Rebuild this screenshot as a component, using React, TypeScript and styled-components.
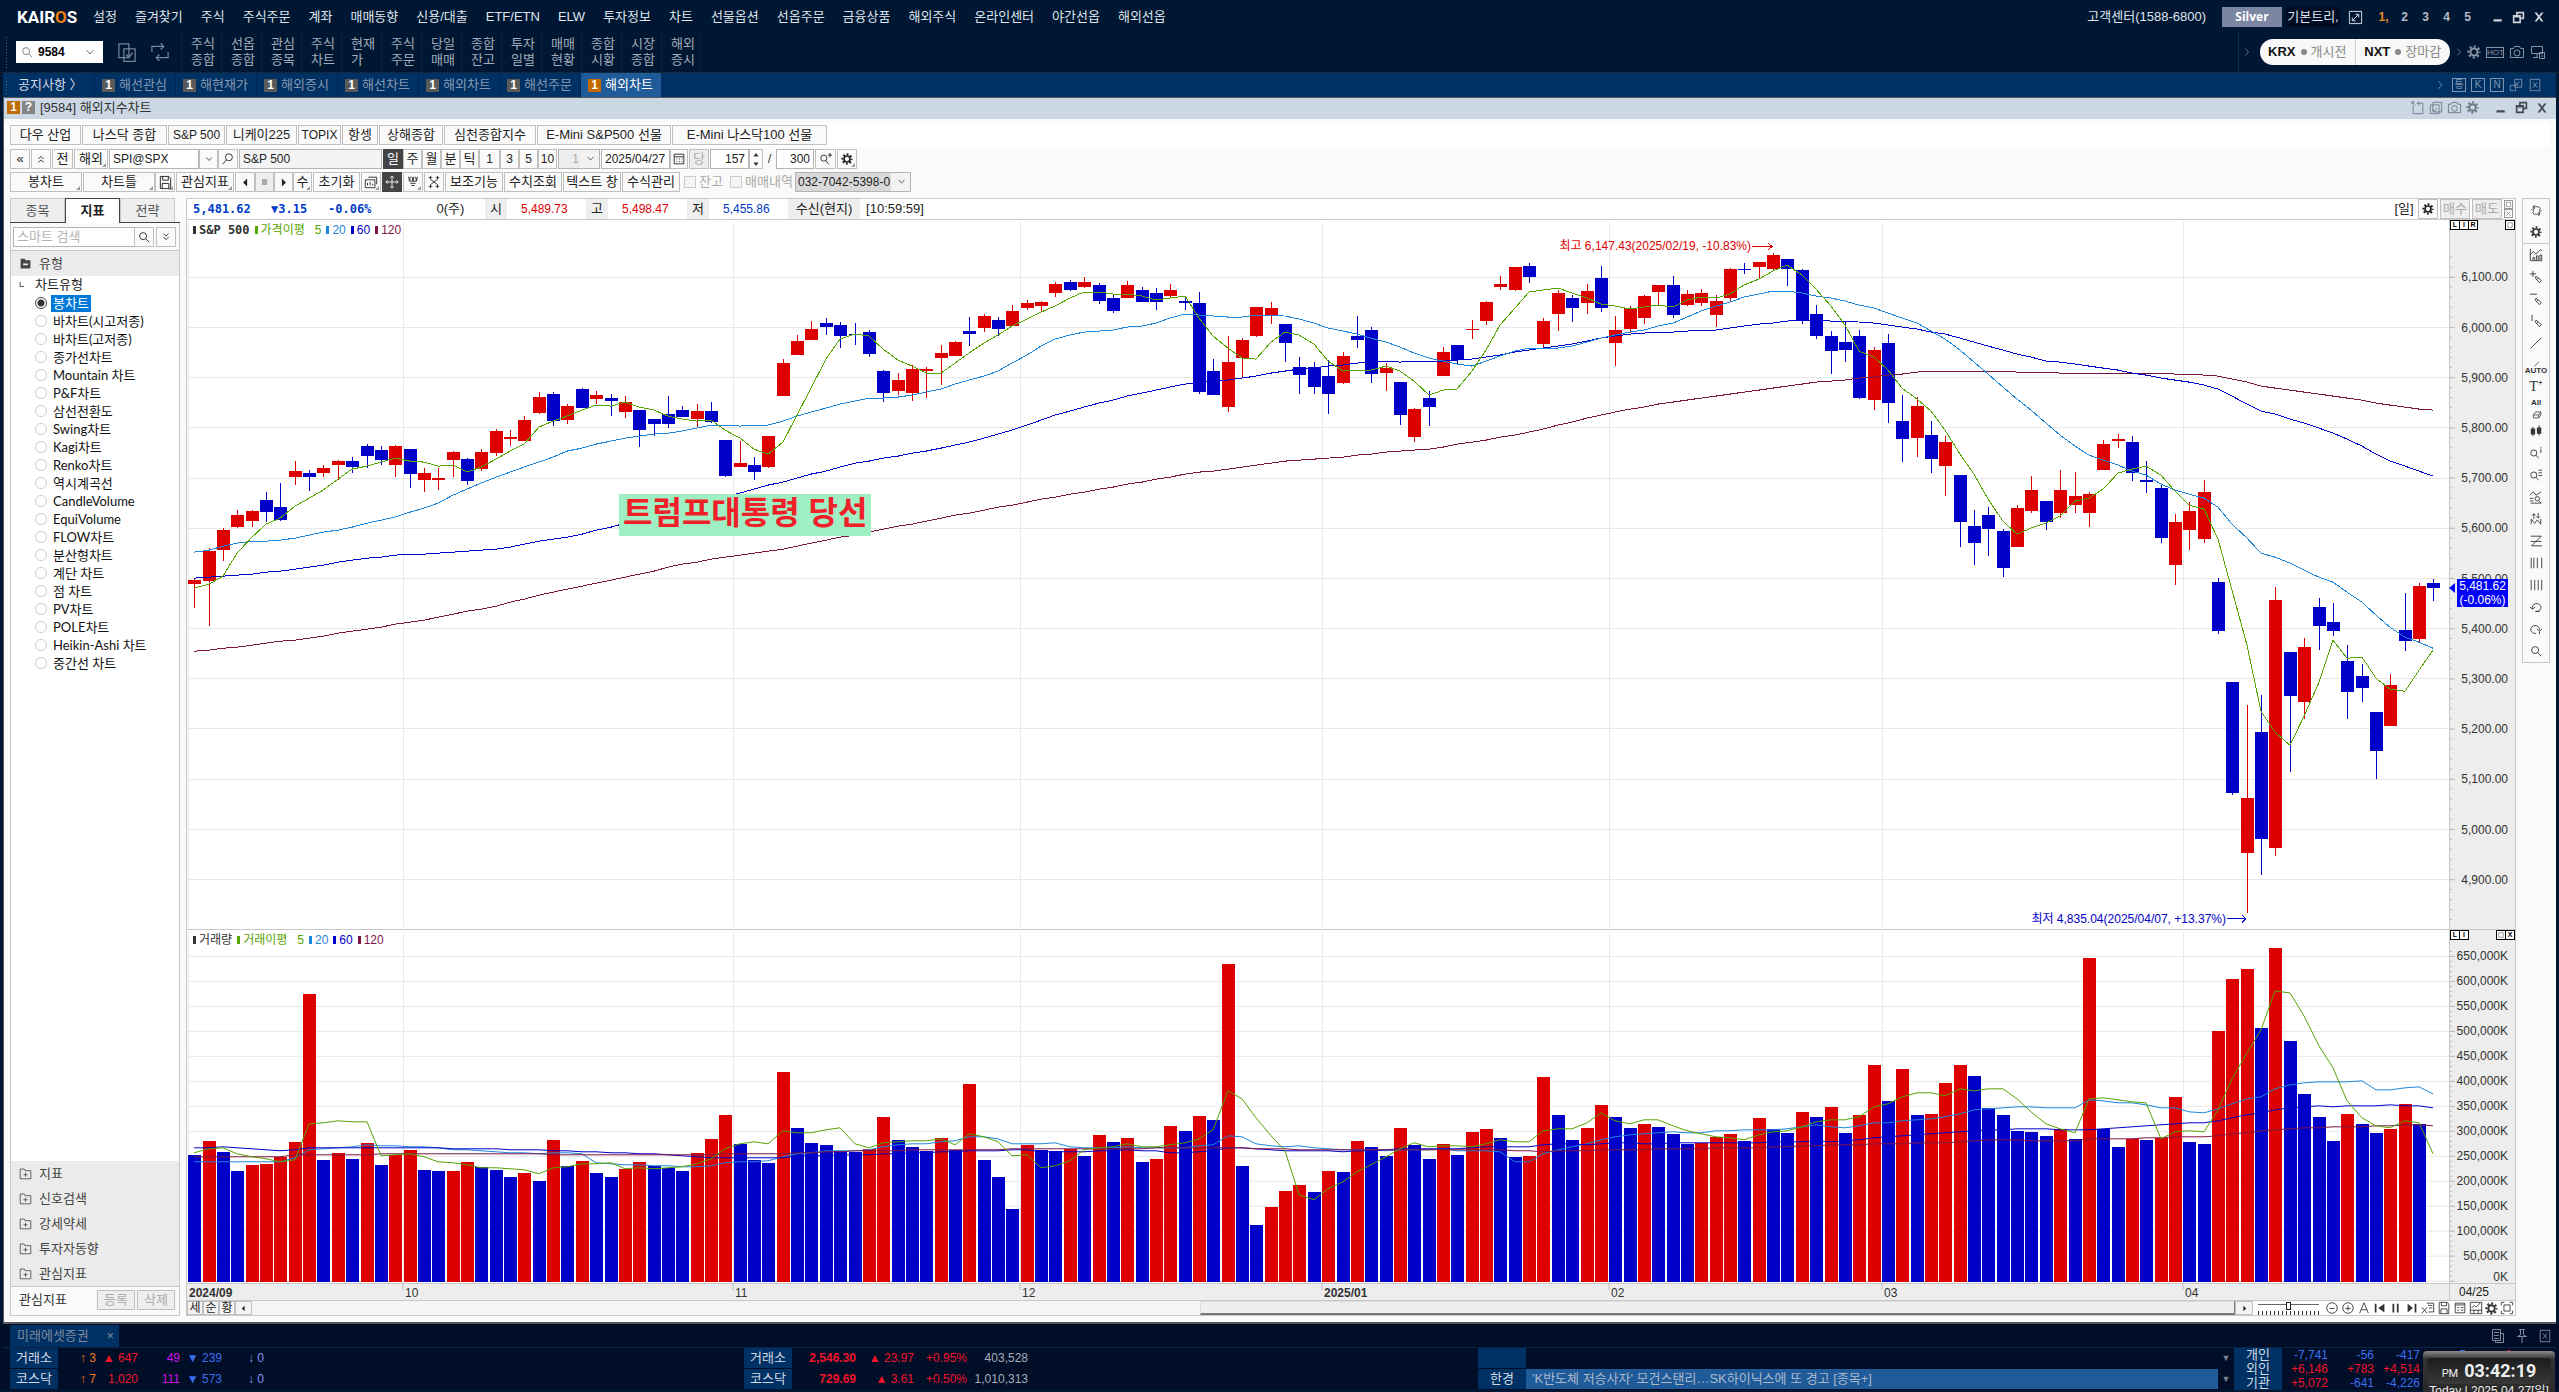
import React from "react";
import styled, { createGlobalStyle, css } from "styled-components";

/* ---------- theme values ---------- */
const ui = '"Liberation Sans", "Noto Sans CJK KR", sans-serif';
const mono = '"DejaVu Sans Mono", "Noto Sans CJK KR", monospace';
const UP = "#de0000";
const DOWN = "#0000c8";
const GREEN = "#55a500";
const SKY = "#1c86dc";
const WINE = "#7d1446";
const NAVY = "#003164";
const LINE = "#c8c8c8";

const Global = createGlobalStyle`
  *, *::before, *::after { box-sizing: border-box; }
  body { margin: 0; background: #001733; overflow: hidden; }
  button, input, select { font: inherit; color: inherit; margin: 0; padding: 0; border-radius: 0; }
  ul, h1, h2 { margin: 0; padding: 0; list-style: none; font: inherit; }
  a { color: inherit; text-decoration: none; }
`;

/* ---------- data: [high, body top, body bottom, low], rising candles flagged by R ---------- */
type Candle = [string, number, number, number, number];
const candleText = `R358,360,364,388 R328,331,361,406 R308,310,330,341 R290,295,307,308 R290,291,301,307 B272,280,292,302 B263,287,300,301 R241,251,257,265 B250,253,257,271 R245,248,253,257
R240,241,245,260 B237,241,247,253 B224,226,236,248 B226,230,240,245 R225,226,245,257 B229,229,254,268 R248,253,260,272 R248,258,260,270 R231,232,240,257 B238,239,261,265
R229,232,249,251 R209,211,233,236 R210,217,219,226 R196,200,221,221 R172,177,193,194 B172,174,201,206 R184,186,200,204 B168,169,188,188 R171,175,179,184 B174,178,181,196
R176,182,192,198 B190,190,210,227 B199,199,204,216 B176,194,204,208 B186,190,197,197 R184,191,199,207 B182,191,202,203 B220,220,256,257 R221,243,247,247 B237,245,252,260
R216,216,247,248 R139,143,176,176 R115,121,135,135 R101,109,120,120 B98,103,107,115 B102,105,116,128 B103,114,115,125 B110,112,134,137 B150,151,173,182 R153,160,171,175
R145,149,173,181 R147,149,151,178 R125,133,138,165 R121,122,136,136 B97,111,114,126 R94,96,108,112 B97,100,109,116 R85,91,106,106 R80,83,88,90 R81,82,86,91
R62,64,73,77 B60,62,70,71 R57,62,67,68 B63,65,81,84 B74,78,91,93 R61,65,78,78 B67,70,82,82 B68,73,82,90 R64,70,76,78 B78,81,83,90
B72,83,172,174 B139,151,175,175 R116,142,187,192 R118,120,138,158 R87,87,116,117 R82,88,95,104 B104,104,123,142 B137,147,155,174 B142,147,167,174 B140,156,174,194
R132,136,163,164 B96,116,120,128 B107,110,154,163 R143,148,153,171 B162,162,195,205 R188,189,217,222 B171,178,187,206 R127,132,156,156 B125,125,140,144 R100,109,110,119
R81,82,101,105 R56,64,67,70 R47,47,70,71 B43,46,57,63 R98,101,124,128 R70,73,94,111 B75,78,88,102 R64,71,83,94 B46,58,88,92 R96,110,123,146
R86,88,109,113 R75,76,98,104 R65,65,72,85 B56,65,95,98 R70,74,85,86 R69,73,83,86 R75,81,95,107 R48,49,78,81 B43,49,50,54 R42,42,47,58
R33,35,49,51 B39,39,49,66 B49,50,101,104 B85,94,116,119 B111,116,131,154 B102,122,130,142 B110,116,178,179 R127,130,180,190 B114,123,183,203 B175,201,219,242
R177,186,218,237 B201,215,239,253 R216,222,246,276 B255,255,302,327 B290,306,323,345 B287,295,309,336 B309,311,348,357 R285,288,327,327 R256,270,291,293 B281,281,302,310
R250,270,293,298 R252,276,285,293 R272,274,293,307 R220,224,250,250 R214,219,221,228 B216,222,253,261 B241,260,262,273 B265,268,318,323 R294,302,345,365 R282,291,310,330
R260,272,319,323 B358,362,411,414 B462,462,573,575 R485,578,633,693 B475,512,619,655 R367,380,628,636 B432,432,476,552 R418,427,482,499 B378,387,406,430 B383,402,411,416
B425,441,472,499 B444,456,468,482 B492,492,531,559 R454,465,506,506 B373,410,421,431 R363,366,419,423 B359,363,368,381`;
const candles: Candle[] = candleText.split(/\s+/).map((t) => {
  const [h, a, b, l] = t.slice(1).split(",").map(Number);
  return [t[0], h, a, b, l];
});
const closes = candles.map(([k, , a, b]) => (k === "R" ? a : b));

const volumes = [
  253, 281, 259, 221, 233, 235, 249, 279, 575, 243, 257, 245, 277, 233, 253, 263, 223, 221, 222, 239, 229, 223, 209,
  217, 201, 283, 231, 241, 217, 209, 225, 239, 231, 227, 221, 257, 285, 333, 275, 243, 237, 419, 307, 277, 273, 261,
  260, 265, 329, 283, 269, 261, 287, 263, 395, 243, 209, 145, 273, 263, 261, 265, 251, 293, 279, 287, 239, 245, 311,
  301, 331, 323, 635, 231, 113, 149, 181, 193, 179, 221, 219, 281, 269, 251, 307, 273, 245, 275, 253, 299, 305, 287,
  249, 251, 409, 333, 283, 307, 353, 329, 307, 315, 309, 295, 276, 277, 289, 295, 281, 327, 305, 297, 339, 329, 349,
  297, 333, 433, 361, 425, 333, 335, 397, 433, 411, 347, 333, 301, 299, 291, 305, 285, 647, 305, 269, 286, 283, 287,
  369, 279, 275, 501, 605, 625, 507, 667, 481, 375, 329, 281, 335, 315, 297, 305, 355, 315, 0,
];

type Seed = [number, number][];
const between = (seed: Seed, i: number) => {
  for (let k = 1; k < seed.length; k++) {
    const [x0, y0] = seed[k - 1];
    const [x1, y1] = seed[k];
    if (i <= x1) return y0 + ((y1 - y0) * (i - x0)) / (x1 - x0);
  }
  return seed[seed.length - 1][1];
};
/* Averages before the first full window come from the earlier history in `seed`. */
const average = (v: number[], n: number, seed: Seed) =>
  v.map((_, i) => (i < n - 1 ? between(seed, i) : v.slice(i - n + 1, i + 1).reduce((s, x) => s + x, 0) / n));

const priceLines = [
  { c: WINE, v: average(closes, 120, [[0, 431], [3, 427], [6, 421], [8, 418], [10, 413], [12, 409], [14, 404], [16, 400], [18, 394], [21, 386], [24, 375], [26, 369], [30, 357], [34, 344], [37, 337], [41, 329], [44, 320], [48, 309], [52, 298], [56, 287], [58, 282], [61, 274], [66, 262], [69, 254], [73, 247], [76, 241], [79, 238], [83, 232], [86, 229], [89, 222], [93, 212], [97, 198], [99, 192], [102, 184], [105, 178], [110, 168], [113, 162], [117, 157], [119, 152]]) },
  { c: DOWN, v: average(closes, 60, [[0, 358], [2, 356], [6, 351], [8, 347], [10, 342], [12, 338], [14, 335], [17, 333], [21, 329], [22, 327], [24, 321], [26, 317], [28, 310], [30, 303], [37, 276], [39, 269], [42, 258], [46, 243], [51, 231], [54, 222], [56, 214], [58, 205], [59, 199]]) },
  { c: SKY, v: average(closes, 20, [[0, 332], [1, 330], [2, 326], [3, 323], [4, 321], [6, 320], [7, 318], [9, 312], [11, 307], [12, 303], [14, 297], [15, 292], [17, 283], [18, 275], [19, 270]]) },
  { c: GREEN, v: average(closes, 5, [[0, 368], [1, 364], [2, 356], [3, 333]]) },
];
const volumeLines = [
  { c: SKY, v: average(volumes, 20, [[0, 239], [6, 239], [7, 247], [8, 263], [11, 269], [12, 273], [16, 269], [18, 264]]) },
  { c: DOWN, v: average(volumes, 60, [[0, 267], [2, 269], [6, 261], [8, 267], [18, 266], [26, 261], [32, 255], [36, 247], [41, 247], [42, 251], [47, 253], [51, 258], [58, 263]]) },
  { c: WINE, v: average(volumes, 120, [[0, 249], [6, 249], [7, 253], [18, 255], [32, 253], [41, 255], [44, 259], [51, 263], [72, 267], [78, 263], [92, 262], [94, 260], [99, 263], [108, 267], [115, 273], [118, 275]]) },
  { c: GREEN, v: average(volumes, 5, [[0, 257], [1, 265], [2, 267], [3, 255]]) },
];

const PLOT_W = 2262;
const PRICE_H = 709;
const VOL_H = 353;
const barX = (i: number) => 7.3 + i * 14.353;
const priceY = (p: number) => 57.4 + (6100 - p) * 0.5017;
const volY = (v: number) => 351.5 - v / 2;
const months: [string, number][] = [["10", 216], ["11", 546], ["12", 833], ["2025/01", 1135], ["02", 1422], ["03", 1695], ["04", 1996]];
const priceTicks = Array.from({ length: 13 }, (_, i) => 6100 - i * 100);
const volTicks = Array.from({ length: 14 }, (_, i) => i * 50);
const pct = (a: number, b: number) => `${(a / b) * 100}%`;

/* ---------- icons ---------- */
const Ico = ({ d, s = 16, f }: { d: string; s?: number; f?: boolean }) => (
  <svg width={s} height={s} viewBox="0 0 16 16" fill={f ? "currentColor" : "none"} stroke={f ? "none" : "currentColor"} strokeWidth="1" aria-hidden="true">
    <path d={d} />
  </svg>
);
const Gear = ({ s = 14 }: { s?: number }) => (
  <svg width={s} height={s} viewBox="0 0 14 14" fill="none" stroke="currentColor" aria-hidden="true">
    <circle cx="7" cy="7" r="3.5" strokeWidth="2" />
    <circle cx="7" cy="7" r="5.5" strokeWidth="2.2" strokeDasharray="2.16 2.16" strokeDashoffset="1.08" />
  </svg>
);
const P = {
  search: "M11 7a4 4 0 1 1-8 0a4 4 0 1 1 8 0M10 10l4 4",
  down: "M4.5 6l3.5 4l3.5-4",
  right: "M6 3.5l4 4.5l-4 4.5",
  min: "M2 11h11v3H2z",
  restore: "M5 1h10v9h-4v5H1V5h4zM7 3v2h4v3h2V3zM3 8v5h6V8z",
  close: "M2 2h3l3 4l3-4h3l-4.500 6l4.500 6h-3l-3-4l-3 4H2l4.500-6z",
  copy: "M1.500 1.500h8v11h-8zM5.500 5.500h9v10h-9zM7.500 10l2 2.500l3-4",
  swap: "M1.500 8V3.500h9M8.500 1l2.500 2.500L8.500 6M14.500 8v4.500h-9M7.500 10L5 12.500L7.500 15",
  expand: "M1.500 1.500h13v13h-13zM5 11l6-6M8 4.500h3.500V8M4.500 8v3.500H8",
  camera: "M1.500 4.500h3l1-2h5l1 2h3v9h-13zM11 9a3 3 0 1 1-6 0a3 3 0 1 1 6 0",
  monitor: "M1.500 2.500h11v7h-11zM7 10v3M3 13.500h5M9.500 8.500h5v6h-5zM12 11v2",
  xbox: "M2.500 1.500h11v13h-11zM5.500 5l5 6M10.500 5l-5 6",
  pop: "M6.500 1.500h8v9h-8zM1.500 8.500h6v6h-6zM12 4L8 8M8 5v3h3",
  note: "M2.500 5v9.500h11v-12h-7M1 1l4 4M1 4V1h3M9 1v4",
  check: "M4.500 1.500h10v11h-10zM1.500 4.500h10v10h-10zM4 9l2 3l3-4",
  cal: "M2.500 2.500h11v11h-11zM2.500 5.500h11M5 8h1M8 8h1M11 8h1M5 11h1M8 11h1M11 11h1",
  save: "M2.500 1.500h9l2 2v11h-11zM5 1.500v4h6v-4M4.500 14v-5h7v5",
  move: "M8 1v14M1 8h14M6 3l2-2l2 2M6 13l2 2l2-2M3 6L1 8l2 2M13 6l2 2l-2 2",
  palette: "M3 2l1 5l1-5M7 2l1 5l1-5M11 2l1 5l1-5M4 7h8M5 9.500h6M6 12h4",
  tools: "M4 1v4l4 3l-4 3v4M12 1v4l-4 3l4 3v4M2 3h4M10 3h4M2 13h4M10 13h4",
  winchart: "M1.500 5.500h11v9h-11zM5 2.500h9.500v8M4 12v-3M7 12v-4M10 12v-2",
  cycle: "M4 10V3.500h7l2 2.500M3 6l-1.500 1.500M12 6v6.500H5L3 10M13 9l1.500-1.500M6 1L4 3.500L6 6M10 10l2 2.500l-2 2.500",
  chart: "M1.500 1v13.500H15M1 8l4-4l3 3l5-5l2 1M4.500 14v-3h2v3M8.500 14V9h2v5M12.500 14V8h2v6",
  crossPen: "M1 4.500h7M4.500 1v7M8 7l6 5l-2 2.500l-5-5.500zM10.500 9l-2 2",
  linePen: "M1 2.500h8M8 7l6 5l-2 2.500l-5-5.500zM10.500 9l-2 2",
  vertPen: "M3.500 1v7M8 7l6 5l-2 2.500l-5-5.500zM10.500 9l-2 2",
  diag: "M2 14L14 2",
  shortDiag: "M6 15L12 9",
  eraser: "M4.500 10.500l3-4h7v4l-3 4h-7zM4.500 10.500h7v4M11.500 10.500l3-4",
  candle: "M4 3h1v2h2v7H5v2H4v-2H2V5h2zM11 1h1v3h2v7h-2v2h-1v-2H9V4h2z",
  searchI: "M9 8a3.500 3.500 0 1 1-7 0a3.500 3.500 0 1 1 7 0M8 10.500l3 3.500M13.500 3v5M13.500 1v1",
  searchL: "M9 8a3.500 3.500 0 1 1-7 0a3.500 3.500 0 1 1 7 0M8 10.500l3 3.500M11 2.500h4M11 5.500h4M11 8.500h4",
  waveS: "M1 6l4-4l3 4l6-4M1 9.500h4M1 12.500h4M2 15h12M12 10a2.500 2.500 0 1 1-5 0a2.500 2.500 0 1 1 5 0M11 12l3 3",
  arrows: "M5.500 8V2M3.500 4l2-2l2 2M10.500 1v6M8.500 5l2 2l2-2M2.500 14V8l4 5l3-4l4 5V8",
  zed: "M2 2.500h12L3 13.500h12M2 8.500h12",
  bars: "M2.500 2v12M5.500 2v12M9.500 2v12M14.500 2v12",
  bars2: "M2.500 2v12M6.500 2v12M10.500 2v12M14.500 2v12",
  undo: "M4 10a5 4.500 0 1 1 4 3M1 8l3 2.500l3-2.500M7 13h5",
  redo: "M12 9a5 4.500 0 1 0-4 4M9 8l3 2.500l3-2.500M12 11v3",
  doc: "M2.500 1.500h8v11h-8zM4 4.500h5M4 7.500h5M4 10.500h5M10.500 5.500h3v9h-8v-2",
  pin: "M5 1.500h6M6.500 2v5M9.500 2v5M3.500 8.500h9M8 9v6M6.500 7l-3 1.500M9.500 7l3 1.500",
  minus: "M14 8A6 6 0 1 1 2 8A6 6 0 1 1 14 8M5 8.500h6",
  plus: "M14 8A6 6 0 1 1 2 8A6 6 0 1 1 14 8M5 8.500h6M8 5v6",
  prev: "M2 3h2v10H2zM13 3v10L6 8z",
  pause: "M4 3h2v10H4zM9 3h2v10H9z",
  next: "M11 3h2v10h-2zM3 3v10l6-5z",
  xl: "M6.500 2.500h8v10h-6M8 5h5M9 8h4M1 7l6 7M7 7l-6 7",
  table: "M2.500 2.500h11v11h-11zM2.500 4.500h11M5 7.500h2M5 10.500h2M9 7.500h3M9 10.500h3",
  full: "M1.500 5V1.500H5M11 1.500h3.500V5M14.500 11v3.500H11M5 14.500H1.500V11M4.500 4.500h7v7h-7z",
  folder: "M1.500 2.500h5l1 2h7v10h-13zM8 7v5M5.500 9.500h5",
};

/* ---------- frame ---------- */
const Page = styled.div`
  display: flex;
  flex-direction: column;
  height: 100vh;
  min-height: 700px;
  font: 13px/16px ${ui};
  color: #222;
  white-space: nowrap;
`;
const Row = styled.div<{ $gap?: number }>`
  display: flex;
  align-items: center;
  gap: ${(p) => p.$gap ?? 0}px;
`;
const Spacer = styled.div`
  flex: 1;
`;
const Bare = styled.button`
  display: inline-flex;
  align-items: center;
  justify-content: center;
  border: 0;
  background: none;
  svg { display: block; }
`;

/* ---------- top menu ---------- */
const TopBar = styled.header`
  display: flex;
  align-items: center;
  height: 32px;
  padding: 2px 14px 0 17px;
  color: #dfe4ec;
`;
const Logo = styled.h1`
  width: 76px;
  font: bold 17px/22px Roboto, sans-serif;
  color: #fff;
  span { color: #f08010; }
`;
const Menu = styled.nav`
  display: flex;
  gap: 18px;
`;
const Silver = styled(Bare)`
  width: 60px;
  height: 20px;
  margin: 0 4px 0 16px;
  background: #7b86a3;
  color: #fff;
  font: bold 12px/20px "Open Sans", sans-serif;
`;
const TreeSelect = styled(Bare)`
  width: 54px;
  height: 20px;
  margin-right: 8px;
  background: #000d24;
`;
const Desks = styled.div`
  display: flex;
  margin-left: 10px;
`;
const Desk = styled(Bare)<{ $on?: boolean }>`
  width: 21px;
  font-weight: bold;
  font-size: 12px;
  color: ${(p) => (p.$on ? "#f08a24" : "#b4bac4")};
`;
const WinBtns = styled.div<{ $c: string }>`
  display: flex;
  gap: 8px;
  margin-left: 14px;
  color: ${(p) => p.$c};
`;

/* ---------- quick bar ---------- */
const QuickBar = styled.div`
  display: flex;
  align-items: center;
  height: 41px;
  padding: 0 13px 0 5px;
  border-bottom: 1px solid #14283c;
`;
const Grip = styled.i`
  align-self: stretch;
  width: 4px;
  margin: 4px 7px 2px 0;
  background-image: radial-gradient(#4d6180 1px, transparent 1px);
  background-size: 3px 3px;
`;
const CodeBox = styled.label`
  display: flex;
  align-items: center;
  width: 87px;
  height: 22px;
  padding: 0 4px;
  background: #fff;
  color: #777;
  input { width: 48px; border: 0; outline: 0; padding-left: 4px; font: bold 12px/18px ${ui}; color: #000; background: none; }
`;
const QuickIcons = styled.div`
  display: flex;
  gap: 13px;
  width: 78px;
  padding-left: 14px;
  color: #74839b;
`;
const Quick = styled.a`
  display: flex;
  align-items: center;
  width: 40px;
  height: 40px;
  padding-left: 9px;
  border-left: 1px solid #062347;
  line-height: 16px;
  color: #a3acba;
  white-space: pre-line;
  &:last-of-type { border-right: 1px solid #062347; }
`;
const MarketWrap = styled.div`
  display: flex;
  align-items: center;
  gap: 2px;
  height: 40px;
  padding-left: 2px;
  border-left: 1px solid #0a2a50;
  color: #8691a2;
`;
const Market = styled.div`
  display: flex;
  width: 190px;
  height: 26px;
  margin: 0 1px 0 5px;
  border-radius: 13px;
  background: #f8f8f8;
  color: #888;
  div { display: flex; flex: 1; align-items: center; justify-content: center; gap: 4px; }
  div + div { border-left: 1px solid #ccc; }
  b { color: #111; font-size: 13px; }
  i { width: 6px; height: 6px; margin-left: 1px; border-radius: 3px; background: #888; }
`;
const HotMark = styled.span`
  width: 18px;
  height: 11px;
  border: 1px solid #8691a2;
  font: 8px/9px ${ui};
  text-align: center;
`;

/* ---------- screen tabs ---------- */
const TabBar = styled.div`
  display: flex;
  align-items: center;
  height: 24px;
  margin: 0 3px;
  padding: 0 14px 0 2px;
  background: ${NAVY};
  color: #7f93ad;
`;
const Notice = styled.a`
  width: 78px;
  padding-left: 2px;
  color: #d5dce6;
`;
const ScreenTab = styled.button<{ $on?: boolean }>`
  display: flex;
  align-items: center;
  gap: 4px;
  width: 81px;
  height: 24px;
  padding-left: 7px;
  border: 0;
  border-left: 1px solid #002550;
  background: ${(p) => (p.$on ? "#1f5a99" : NAVY)};
  color: ${(p) => (p.$on ? "#fff" : "#8698b0")};
`;
const Badge = styled.span<{ $bg: string }>`
  width: 13px;
  height: 13px;
  background: ${(p) => p.$bg};
  color: #fff;
  font: bold 12px/13px ${ui};
  text-align: center;
`;
const Letter = styled(Bare)`
  width: 14px;
  height: 14px;
  border: 1px solid #7f93ad;
  font-size: 10px;
  line-height: 12px;
`;

/* ---------- window ---------- */
const Window = styled.main`
  display: flex;
  flex: 1;
  flex-direction: column;
  min-height: 0;
  margin: 0 3px;
  border: solid #55585f;
  border-width: 1px 0 2px 1px;
  background: #fafafa;
`;
const TitleBar = styled.div`
  display: flex;
  align-items: center;
  gap: 2px;
  height: 21px;
  margin-bottom: 4px;
  padding: 0 8px 2px 3px;
  background: #cbd7e3;
  color: #333;
  h2 { margin-left: 3px; }
`;
const TitleIcons = styled.div`
  display: flex;
  gap: 4px;
  color: #6c7784;
`;
const Presets = styled.div`
  display: flex;
  align-items: center;
  gap: 1px;
  height: 24px;
  padding-left: 6px;
  margin-right: 6px;
  background: #fff;
`;
const ToolRow = styled.div`
  display: flex;
  align-items: center;
  gap: 1px;
  height: 20px;
  margin-top: 2px;
  padding-left: 6px;
  & + & { margin-top: 3px; }
`;
const Btn = styled.button<{ $w: number; $on?: boolean; $menu?: boolean; $off?: boolean; $latin?: boolean }>`
  position: relative;
  display: flex;
  align-items: center;
  justify-content: center;
  flex: none;
  width: ${(p) => p.$w}px;
  height: 20px;
  border: 1px solid ${(p) => (p.$on ? "#444" : "#c0c0c0")};
  background: ${(p) => (p.$on ? "#444" : p.$off ? "#eee" : "#fafafa")};
  color: ${(p) => (p.$on ? "#fff" : p.$off ? "#aaa" : "#222")};
  font-size: ${(p) => (p.$latin ? 12 : 13)}px;
  svg { display: block; }
  ${(p) => p.$menu && css`
    &::after {
      content: "";
      position: absolute;
      right: 1px;
      bottom: 1px;
      border: 2px solid transparent;
      border-right-color: #999;
      border-bottom-color: #999;
    }
  `}
`;
const Field = styled.input<{ $w: number; $bg?: string; $right?: boolean }>`
  flex: none;
  width: ${(p) => p.$w}px;
  height: 20px;
  padding: 0 3px;
  border: 1px solid #b4b4b4;
  outline: 0;
  background: ${(p) => p.$bg ?? "#fff"};
  font-size: 12px;
  color: #222;
  text-align: ${(p) => (p.$right ? "right" : "left")};
`;
const Pick = styled.div<{ $w: number; $bg: string; $fg: string; $align: string }>`
  position: relative;
  width: ${(p) => p.$w}px;
  height: 20px;
  border: 1px solid #b4b4b4;
  background: #fff;
  select {
    appearance: none;
    display: block;
    width: 100%;
    height: 18px;
    padding: 0 20px 0 2px;
    border: 0;
    background: linear-gradient(to right, ${(p) => p.$bg} calc(100% - 19px), #f2f2f2 0);
    color: ${(p) => p.$fg};
    font-size: 12px;
    text-align: ${(p) => p.$align};
    text-align-last: ${(p) => p.$align};
  }
  svg { position: absolute; right: 2px; top: 2px; pointer-events: none; color: #444; }
`;
const Spin = styled.div`
  display: flex;
  flex-direction: column;
  width: 14px;
  height: 20px;
  margin-left: -1px;
  border: 1px solid #c0c0c0;
  button { flex: 1; color: #333; }
`;
const Tick = styled.label<{ $w: number }>`
  display: flex;
  align-items: center;
  gap: 3px;
  width: ${(p) => p.$w}px;
  padding-left: 3px;
  color: #aaa;
  input { appearance: none; flex: none; width: 12px; height: 12px; border: 1px solid #ccc; background: #f4f4f4; }
`;
const Slash = styled.span`
  width: 11px;
  text-align: center;
  color: #444;
`;

const Work = styled.div`
  display: flex;
  flex: 1;
  align-items: flex-start;
  gap: 6px;
  min-height: 0;
  margin-top: 6px;
  padding: 0 6px 6px;
`;

/* ---------- side panel ---------- */
const Side = styled.aside`
  display: flex;
  flex-direction: column;
  align-self: stretch;
  flex: none;
  width: 170px;
  border: 1px solid ${LINE};
  border-top: 0;
  background: #fff;
`;
const SideTabs = styled.div`
  display: flex;
  height: 25px;
  margin: 0 -1px;
  background: #fafafa;
  border-bottom: 1px solid #444;
`;
const SideTab = styled.button<{ $on?: boolean }>`
  width: 55px;
  height: ${(p) => (p.$on ? 25 : 24)}px;
  border: 1px solid ${(p) => (p.$on ? "#444" : LINE)};
  border-bottom: 0;
  background: ${(p) => (p.$on ? "#fff" : "#eee")};
  color: ${(p) => (p.$on ? "#222" : "#555")};
  font-weight: ${(p) => (p.$on ? "bold" : "normal")};
`;
const Find = styled.div`
  display: flex;
  height: 28px;
  padding: 4px 2px;
  background: #fafafa;
  border-bottom: 1px solid ${LINE};
  input::placeholder { color: #b4b4b4; opacity: 1; font-size: 13px; }
  button + button { margin-left: 2px; }
  input + button { margin-left: -1px; }
`;
const Group = styled.button`
  display: flex;
  align-items: center;
  gap: 7px;
  width: 100%;
  height: 25px;
  padding-left: 8px;
  border: 0;
  background: #ebebeb;
  color: #444;
`;
const Tree = styled.fieldset`
  flex: 1;
  min-width: 0;
  margin: 0;
  padding: 0;
  border: 0;
  overflow: hidden;
  legend { display: flex; gap: 4px; align-items: center; height: 18px; padding: 0 0 0 8px; color: #222; }
`;
const Choice = styled.label`
  display: flex;
  align-items: center;
  height: 18px;
  padding-left: 24px;
  font: 13px/17px Lato, "Noto Sans CJK KR", sans-serif;
  color: #111;
  input { appearance: none; width: 12px; height: 12px; margin-right: 4px; border: 1px solid #ccc; border-radius: 6px; background: #fff; }
  input:checked { border-color: #444; background: radial-gradient(#333 3px, #fff 4px); }
  span { padding: 0 2px; }
  input:checked + span { background: #0078d7; color: #fff; }
`;
const SideFoot = styled.div`
  display: flex;
  align-items: center;
  gap: 2px;
  height: 29px;
  padding: 0 4px 2px 8px;
  border-top: 1px solid ${LINE};
  background: #fafafa;
  span { flex: 1; color: #333; }
`;

/* ---------- chart ---------- */
const Chart = styled.section`
  display: flex;
  flex: 1;
  flex-direction: column;
  align-self: stretch;
  min-width: 0;
  border: 1px solid ${LINE};
  background: #fff;
`;
const Quote = styled.div`
  display: flex;
  align-items: center;
  height: 21px;
  padding: 0 1px 0 6px;
  border-bottom: 1px solid ${LINE};
  color: #222;
`;
const Big = styled.b<{ $w: number }>`
  width: ${(p) => p.$w}px;
  font: bold 12px/16px ${mono};
  color: #003cc8;
`;
const Num = styled.span<{ $c: string; $w: number }>`
  width: ${(p) => p.$w}px;
  padding-left: 14px;
  font-size: 12px;
  color: ${(p) => p.$c};
`;
const Tag = styled.span<{ $w: number; $bg?: string }>`
  width: ${(p) => p.$w}px;
  height: 20px;
  line-height: 20px;
  background: ${(p) => p.$bg ?? "#eee"};
  text-align: center;
`;
const Stack = styled.div`
  display: flex;
  flex-direction: column;
  width: 10px;
  margin-left: 2px;
  button { height: 9px; width: 9px; border: 1px solid #999; color: #333; }
`;
const Pane = styled.div<{ $grow: number }>`
  display: flex;
  flex: ${(p) => p.$grow} 1 0;
  min-height: 0;
`;
const PricePane = styled(Pane)`
  border-bottom: 1px solid ${LINE};
`;
const Plot = styled.div`
  position: relative;
  flex: 1;
  min-width: 0;
  svg { display: block; width: 100%; height: 100%; }
  text { font-size: 12px; font-family: ${ui}; }
`;
const Axis = styled.div`
  position: relative;
  flex: none;
  width: 66px;
  border-left: 1px solid ${LINE};
  background: #ededed;
  & > svg { display: block; width: 100%; height: 100%; }
  text { font-size: 12px; font-family: ${ui}; fill: #333; }
`;
const Legend = styled.div`
  position: absolute;
  left: 6px;
  top: 2px;
  display: flex;
  align-items: center;
  gap: 5px;
  b { font: bold 12px/16px ${mono}; color: #333; }
`;
const Key = styled.span<{ $c: string }>`
  display: flex;
  align-items: center;
  gap: 3px;
  font-size: 12px;
  color: ${(p) => p.$c};
  &::before { content: ""; width: 3px; height: 8px; background: ${(p) => p.$c}; }
`;
const Memo = styled.div`
  position: absolute;
  left: 19.1%;
  top: 38.6%;
  height: 42px;
  padding: 0 4px;
  background: #a0eec3;
  color: #f02028;
  font: bold 32px/38px ${ui};
`;
const LastTag = styled.div`
  position: absolute;
  left: 7px;
  top: ${pct(359, PRICE_H)};
  width: 51px;
  padding: 0 1px;
  background: #0000ff;
  color: #fff;
  font: 12px/14px ${ui};
  text-align: center;
  &::before { content: ""; position: absolute; left: -8px; top: 4px; border: 5px solid transparent; border-left: 0; border-right: 6px solid #0000ff; }
`;
const Corner = styled.div<{ $right?: boolean }>`
  position: absolute;
  top: 0;
  ${(p) => (p.$right ? "right: 1px" : "left: 0")};
  display: flex;
  button { display: flex; align-items: center; justify-content: center; width: 10px; height: 10px; margin-right: -1px; border: 1px solid #000; background: #fff; color: #000; font: bold 7px/8px ${ui}; }
`;
const Dates = styled.div`
  display: flex;
  flex: none;
  height: 17px;
  border-top: 1px solid ${LINE};
  background: #ededed;
  svg { flex: 1; display: block; height: 16px; }
  text { font-size: 12px; font-family: ${ui}; fill: #333; }
  span { width: 66px; padding-left: 9px; border-left: 1px solid ${LINE}; font-size: 12px; }
`;
const ScrollRow = styled.div`
  display: flex;
  flex: none;
  align-items: stretch;
  height: 15px;
  border-top: 1px solid ${LINE};
`;
const Mini = styled.button<{ $w: number }>`
  display: flex;
  align-items: center;
  justify-content: center;
  width: ${(p) => p.$w}px;
  border: 1px solid #c0c0c0;
  background: #f4f4f4;
  font-size: 12px;
  line-height: 12px;
`;
const Track = styled.div`
  display: flex;
  flex: 1;
  justify-content: flex-end;
  background: #f5f5f5;
`;
const Thumb = styled.div`
  width: 52.2%;
  border: 1px solid #ddd;
  border-right-color: #777;
  border-bottom: 2px solid #777;
  background: #efefef;
`;
const Zoomer = styled.label`
  display: flex;
  width: 71px;
  padding: 0 5px;
  background: repeating-linear-gradient(to right, #333 0 1px, transparent 1px 4px) 5px 10px / 61px 4px no-repeat;
  input { appearance: none; width: 61px; height: 10px; background: linear-gradient(#666, #666) 0 3px / 100% 1px no-repeat; }
  input::-webkit-slider-thumb { appearance: none; width: 5px; height: 8px; border: 1px solid #222; background: #fff; }
`;
const FootIcons = styled.div`
  display: flex;
  align-items: center;
  gap: 2px;
  padding: 0 1px 0 1px;
  color: #333;
`;

/* ---------- right strip ---------- */
const Strip = styled.div`
  display: flex;
  flex-direction: column;
  flex: none;
  width: 28px;
  border: 1px solid ${LINE};
  color: #333;
  button { flex: none; flex-direction: column; width: 26px; height: 22px; }
  button:nth-child(2) { height: 23px; border-bottom: 1px solid ${LINE}; }
`;
const Word = styled.span`
  font: bold 8px/8px ${ui};
`;
const Letters = styled.span`
  font: 14px/16px "Liberation Serif", serif;
`;

/* ---------- bottom panel ---------- */
const Bottom = styled.footer`
  position: relative;
  flex: none;
  height: 68px;
  padding: 1px 3px 2px;
  background: #000e28;
  border-bottom: 2px solid #001733;
  color: #d3dae4;
`;
const NewsTab = styled.div`
  display: flex;
  align-items: center;
  height: 23px;
  padding: 0 4px 0 0;
  border-bottom: 1px solid #0a2347;
  color: #7f8ba0;
`;
const AccountTab = styled(Bare)`
  justify-content: space-between;
  width: 109px;
  height: 22px;
  margin-left: 7px;
  padding: 0 5px 0 7px;
  background: ${NAVY};
`;
const Feeds = styled.div`
  display: grid;
  grid-template-columns: 734px 734px 756px 1fr;
  height: 42px;
  padding-left: 7px;
`;
const Feed = styled.div`
  display: grid;
  grid-template-rows: 20px 20px;
  row-gap: 1px;
  min-width: 0;
`;
const Name = styled.span`
  flex: none;
  width: 48px;
  height: 20px;
  background: ${NAVY};
  text-align: center;
  line-height: 20px;
`;
const Val = styled.span<{ $w: number; $c: string; $b?: boolean }>`
  flex: none;
  width: ${(p) => p.$w}px;
  color: ${(p) => p.$c};
  font-size: 12px;
  font-weight: ${(p) => (p.$b ? "bold" : "normal")};
  text-align: right;
`;
const Headline = styled.a<{ $on?: boolean }>`
  flex: 1;
  height: 20px;
  padding-left: 6px;
  background: ${(p) => (p.$on ? "#1f5a99" : "none")};
  color: #a9b9cc;
  line-height: 20px;
`;
const Caret = styled.span`
  width: 16px;
  color: #7b828e;
  font-size: 9px;
  text-align: center;
`;
const Investors = styled.div`
  display: grid;
  grid-template-rows: repeat(3, 14px);
  line-height: 14px;
  span:first-child { height: 14px; line-height: 14px; }
`;
const Clock = styled.div`
  position: absolute;
  right: 4px;
  top: 27px;
  width: 132px;
  height: 41px;
  padding: 7px 4px 0;
  overflow: hidden;
  border-radius: 4px 4px 0 0;
  background: linear-gradient(#8a8a8a, #333 8px, #2a2a2a);
  color: #eee;
  time { display: block; text-align: center; }
  time:first-child { height: 26px; border-radius: 4px; background: linear-gradient(#1c1c1c, #383838); font: bold 18px/26px Roboto, sans-serif; }
  small { margin-right: 6px; font: 11px/20px Roboto, sans-serif; }
  time + time { font: 12px/14px ${ui}; }
`;

/* ---------- chart drawing ---------- */
const points = (v: number[], y: (n: number) => number) => v.map((n, i) => `${Math.round(barX(i))},${Math.round(y(n))}`).join(" ");

const Months = ({ h }: { h: number }) => (
  <g stroke="#e8e8e8">
    <path d={`M1.5 2V${h}`} />
    {months.map(([m, x]) => <path key={m} d={`M${x + 0.5} 2V${h}`} />)}
  </g>
);

const PriceChart = () => (
  <svg role="img" aria-label="S&P 500 일봉 차트">
    <svg viewBox={`0 0 ${PLOT_W} ${PRICE_H}`} preserveAspectRatio="none" shapeRendering="crispEdges">
      <Months h={PRICE_H - 2} />
      {priceTicks.map((p) => <path key={p} d={`M1 ${Math.floor(priceY(p)) + 0.5}H${PLOT_W}`} stroke="#e8e8e8" />)}
      {candles.map(([k, h, a, b, l], i) => {
        const c = k === "R" ? UP : DOWN;
        const x = Math.round(barX(i));
        return (
          <g key={i} fill={c}>
            <rect x={x} y={h} width="1" height={Math.max(1, l - h)} />
            <rect x={x - 6} y={a} width="13" height={Math.max(1, b - a)} />
          </g>
        );
      })}
      {priceLines.map((s, i) => <polyline key={i} points={points(s.v, (n) => n)} fill="none" stroke={s.c} />)}
      <path d="M1565 26.500h20M1581 23l4 3.500l-4 3.500" fill="none" stroke={UP} />
      <path d="M2040 698.500h19M2055 695l4 3.500l-4 3.500" fill="none" stroke={DOWN} />
    </svg>
    <text x={pct(1564, PLOT_W)} y={pct(30, PRICE_H)} textAnchor="end" fill={UP}>최고 6,147.43(2025/02/19, -10.83%)</text>
    <text x={pct(2039, PLOT_W)} y={pct(703, PRICE_H)} textAnchor="end" fill={DOWN}>최저 4,835.04(2025/04/07, +13.37%)</text>
  </svg>
);

const VolumeChart = () => (
  <svg viewBox={`0 0 ${PLOT_W} ${VOL_H}`} preserveAspectRatio="none" shapeRendering="crispEdges" role="img" aria-label="거래량 차트">
    <Months h={VOL_H} />
    {volTicks.map((v) => <path key={v} d={`M1 ${Math.floor(volY(v)) + 0.5}H${PLOT_W}`} stroke="#e8e8e8" />)}
    {volumes.map((v, i) => (
      <rect key={i} x={Math.round(barX(i)) - 6} y={Math.round(volY(v))} width="13" height={Math.round(v / 2)} fill={i > 0 && v > volumes[i - 1] ? UP : DOWN} />
    ))}
    {volumeLines.map((s, i) => <polyline key={i} points={points(s.v, volY)} fill="none" stroke={s.c} />)}
  </svg>
);

const AxisScale = ({ h, marks, first, step }: { h: number; marks: [string, number][]; first: number; step: number }) => (
  <svg>
    <g stroke="#bbb">
      {Array.from({ length: Math.floor((h - first) / step) + 1 }, (_, i) => {
        const y = pct(first + i * step, h);
        return <line key={i} x1="0" x2="2" y1={y} y2={y} />;
      })}
      {marks.map(([t, y]) => <line key={t} x1="0" x2="5" y1={pct(y, h)} y2={pct(y, h)} />)}
    </g>
    {marks.map(([t, y]) => <text key={t} x="58" y={pct(Math.min(y, h - 6), h)} dy="4" textAnchor="end">{t}</text>)}
  </svg>
);

/* ---------- content ---------- */
const menu = ["설정", "즐겨찾기", "주식", "주식주문", "계좌", "매매동향", "신용/대출", "ETF/ETN", "ELW", "투자정보", "차트", "선물옵션", "선옵주문", "금융상품", "해외주식", "온라인센터", "야간선옵", "해외선옵"];
const quick = ["주식\n종합", "선옵\n종합", "관심\n종목", "주식\n차트", "현재\n가", "주식\n주문", "당일\n매매", "종합\n잔고", "투자\n일별", "매매\n현황", "종합\n시황", "시장\n종합", "해외\n증시"];
const screens = ["해선관심", "해현재가", "해외증시", "해선차트", "해외차트", "해선주문", "해외차트"];
const presets: [string, number, boolean?][] = [["다우 산업", 71], ["나스닥 종합", 85], ["S&P 500", 57, true], ["니케이225", 71], ["TOPIX", 43, true], ["항셍", 36], ["상해종합", 64], ["심천종합지수", 92], ["E-Mini S&P500 선물", 134], ["E-Mini 나스닥100 선물", 155]];
const types = ["봉차트", "바차트(시고저종)", "바차트(고저종)", "종가선차트", "Mountain 차트", "P&F차트", "삼선전환도", "Swing차트", "Kagi차트", "Renko차트", "역시계곡선", "CandleVolume", "EquiVolume", "FLOW차트", "분산형차트", "계단 차트", "점 차트", "PV차트", "POLE차트", "Heikin-Ashi 차트", "중간선 차트"];
const groups = ["지표", "신호검색", "강세약세", "투자자동향", "관심지표"];
const stripIcons: [string, string][] = [["지표 차트", P.chart], ["십자선", P.crossPen], ["수평선", P.linePen], ["수직선", P.vertPen], ["추세선", P.diag], ["자동추세선", "auto"], ["텍스트", "text"], ["전체삭제", "all"], ["캔들", P.candle], ["정보", P.searchI], ["목록", P.searchL], ["패턴", P.waveS], ["반전", P.arrows], ["피보나치", P.zed], ["시간대", P.bars], ["등간격", P.bars2], ["되돌리기", P.undo], ["다시실행", P.redo], ["확대", P.search]];
const investors: [string, string[]][] = [["개인", ["-7,741", "-56", "-417", "5", "0"]], ["외인", ["+6,146", "+783", "+4,514"]], ["기관", ["+5,072", "-641", "-4,226"]]];

const StripGlyph = ({ d }: { d: string }) => {
  if (d === "auto") return <><Ico d={P.shortDiag} s={12} /><Word>AUTO</Word></>;
  if (d === "text") return <Letters>T⁺</Letters>;
  if (d === "all") return <><Word>All</Word><Ico d={P.eraser} s={12} /></>;
  return <Ico d={d} s={14} f={d === P.candle} />;
};

const Keys = () => (
  <>
    <Key $c={SKY}>20</Key>
    <Key $c={DOWN}>60</Key>
    <Key $c={WINE}>120</Key>
  </>
);

const Breadth = ({ n, v }: { n: string; v: [string, string, string, string, string] }) => (
  <Row>
    <Name>{n}</Name>
    <Val $w={38} $c="#f07820">{v[0]}</Val>
    <Val $w={42} $c="#f01428">{v[1]}</Val>
    <Val $w={42} $c="#d214e6">{v[2]}</Val>
    <Val $w={42} $c="#3c6ef0">{v[3]}</Val>
    <Val $w={42} $c="#8c96f0">{v[4]}</Val>
  </Row>
);
const IndexRow = ({ n, v }: { n: string; v: string[] }) => (
  <Row>
    <Name>{n}</Name>
    <Val $w={64} $c="#f01428" $b>{v[0]}</Val>
    <Val $w={58} $c="#f01428">{v[1]}</Val>
    <Val $w={53} $c="#f01428">{v[2]}</Val>
    <Val $w={61} $c="#a8aeb8">{v[3]}</Val>
  </Row>
);

const WindowButtons = ({ c }: { c: string }) => (
  <WinBtns $c={c}>
    <Bare aria-label="최소화"><Ico d={P.min} s={12} f /></Bare>
    <Bare aria-label="이전 크기"><Ico d={P.restore} s={13} f /></Bare>
    <Bare aria-label="닫기"><Ico d={P.close} s={12} f /></Bare>
  </WinBtns>
);

const MarketArea = () => (
  <MarketWrap>
    <Bare aria-label="이전 시장"><Ico d={P.right} s={12} /></Bare>
    <Market>
      <div><b>KRX</b><i />개시전</div>
      <div><b>NXT</b><i />장마감</div>
    </Market>
    <Bare aria-label="다음 시장"><Ico d={P.right} s={12} /></Bare>
    <Row $gap={5}>
      <Bare aria-label="설정"><Gear s={14} /></Bare>
      <HotMark>HOT</HotMark>
      <Bare aria-label="캡처"><Ico d={P.camera} /></Bare>
      <Bare aria-label="화면 잠금"><Ico d={P.monitor} /></Bare>
    </Row>
  </MarketWrap>
);

const Tools = () => (
  <>
    <ToolRow>
      <Btn $w={20}>«</Btn>
      <Btn $w={20} aria-label="위로"><Ico d="M5 8l3-3l3 3M5 12l3-3l3 3" s={14} /></Btn>
      <Btn $w={21}>전</Btn>
      <Btn $w={34} $menu>해외</Btn>
      <Row>
        <Field $w={90} defaultValue="SPI@SPX" aria-label="종목코드" />
        <Btn $w={19} aria-label="종목 목록"><Ico d={P.down} s={12} /></Btn>
        <Btn $w={20} aria-label="종목 찾기"><Ico d="M13 6a4 4 0 1 1-8 0a4 4 0 1 1 8 0M6 9l-4 5" s={14} /></Btn>
      </Row>
      <Field $w={143} $bg="#f4f4f4" defaultValue="S&P 500" aria-label="종목명" />
      <Row>
        {["일", "주", "월", "분", "틱"].map((t, i) => <Btn key={t} $w={i ? 19 : 20} $on={!i}>{t}</Btn>)}
        {["1", "3", "5", "10"].map((t) => <Btn key={t} $w={t === "1" ? 21 : 19} $latin>{t}</Btn>)}
      </Row>
      <Pick $w={42} $bg="#eee" $fg="#aaa" $align="right">
        <select aria-label="주기"><option>1</option></select>
        <Ico d={P.down} s={13} />
      </Pick>
      <Row>
        <Field $w={69} defaultValue="2025/04/27" aria-label="기준일" />
        <Btn $w={18} aria-label="달력"><Ico d={P.cal} s={14} /></Btn>
      </Row>
      <Btn $w={20} $off>당</Btn>
      <Field $w={39} $right defaultValue="157" aria-label="표시 개수" />
      <Spin>
        <Bare aria-label="늘리기"><Ico d="M8 4l5 7H3z" s={8} f /></Bare>
        <Bare aria-label="줄이기"><Ico d="M8 12l5-7H3z" s={8} f /></Bare>
      </Spin>
      <Slash>/</Slash>
      <Field $w={38} $right defaultValue="300" aria-label="전체 개수" />
      <Btn $w={21} aria-label="추가 조회"><Ico d="M9 7a3.500 3.500 0 1 1-7 0a3.500 3.500 0 1 1 7 0M8 10l3 4M10 3.500h5M12.500 1v5" s={14} /></Btn>
      <Btn $w={20} $menu aria-label="환경설정"><Gear s={12} /></Btn>
    </ToolRow>
    <ToolRow>
      <Btn $w={72} $menu>봉차트</Btn>
      <Row>
        <Btn $w={72} $menu>차트틀</Btn>
        <Btn $w={20} $menu aria-label="저장"><Ico d={P.save} s={15} /></Btn>
      </Row>
      <Btn $w={58} $menu>관심지표</Btn>
      <Row>
        <Btn $w={20} aria-label="이전"><Ico d="M10 3v10L5 8z" s={13} f /></Btn>
        <Btn $w={19} $off aria-label="정지"><Ico d="M4 4h7v8H4z" s={12} f /></Btn>
        <Btn $w={19} aria-label="다음"><Ico d="M6 3v10l5-5z" s={13} f /></Btn>
        <Btn $w={19} $menu>수</Btn>
      </Row>
      <Btn $w={47}>초기화</Btn>
      <Btn $w={20} $menu aria-label="창 배치"><Ico d={P.winchart} s={14} /></Btn>
      <Btn $w={20} $on aria-label="십자선"><Ico d={P.move} s={14} /></Btn>
      <Btn $w={20} $menu aria-label="색상"><Ico d={P.palette} s={14} /></Btn>
      <Btn $w={20} aria-label="도구"><Ico d={P.tools} s={14} /></Btn>
      <Btn $w={58}>보조기능</Btn>
      <Btn $w={58}>수치조회</Btn>
      <Btn $w={58}>텍스트 창</Btn>
      <Btn $w={58}>수식관리</Btn>
      <Tick $w={45}><input type="checkbox" disabled />잔고</Tick>
      <Tick $w={67}><input type="checkbox" disabled />매매내역</Tick>
      <Pick $w={116} $bg="#d9d9d9" $fg="#222" $align="left">
        <select aria-label="계좌번호"><option>032-7042-5398-0</option></select>
        <Ico d={P.down} s={13} />
      </Pick>
    </ToolRow>
  </>
);

export default function App() {
  return (
    <Page>
      <Global />
      <TopBar>
        <Logo>KAIR<span>O</span>S</Logo>
        <Menu>{menu.map((m) => <a key={m} href="#menu">{m}</a>)}</Menu>
        <Spacer />
        <span>고객센터(1588-6800)</span>
        <Silver>Silver</Silver>
        <TreeSelect>기본트리,</TreeSelect>
        <Bare aria-label="확장"><Ico d={P.expand} s={15} /></Bare>
        <Desks>
          <Desk $on>1,</Desk>
          {["2", "3", "4", "5"].map((d) => <Desk key={d}>{d}</Desk>)}
        </Desks>
        <WindowButtons c="#cfd2d8" />
      </TopBar>

      <QuickBar>
        <Grip />
        <CodeBox>
          <Ico d={P.search} s={14} />
          <input defaultValue="9584" aria-label="화면번호" />
          <Ico d={P.down} s={16} />
        </CodeBox>
        <QuickIcons>
          <Bare aria-label="복사"><Ico d={P.copy} s={20} /></Bare>
          <Bare aria-label="교체"><Ico d={P.swap} s={20} /></Bare>
        </QuickIcons>
        {quick.map((q) => <Quick key={q} href="#quick">{q}</Quick>)}
        <Spacer />
        <MarketArea />
      </QuickBar>

      <TabBar>
        <Grip />
        <Notice href="#notice">공지사항 〉</Notice>
        {screens.map((s, i) => (
          <ScreenTab key={i} $on={i === 6}>
            <Badge $bg={i === 6 ? "#c06a00" : "#5a5a5a"}>1</Badge>{s}
          </ScreenTab>
        ))}
        <Spacer />
        <Row $gap={5}>
          <Bare aria-label="더보기"><Ico d={P.right} s={14} /></Bare>
          <Letter>통</Letter>
          <Letter>K</Letter>
          <Letter>N</Letter>
          <Bare aria-label="팝업"><Ico d={P.pop} s={14} /></Bare>
          <Bare aria-label="닫기"><Ico d={P.xbox} s={14} /></Bare>
        </Row>
      </TabBar>

      <Window>
        <TitleBar>
          <Badge $bg="#c06a00">1</Badge>
          <Badge $bg="#858585">?</Badge>
          <h2>[9584] 해외지수차트</h2>
          <Spacer />
          <TitleIcons>
            <Bare aria-label="메모"><Ico d={P.note} s={14} /></Bare>
            <Bare aria-label="복제"><Ico d={P.check} s={14} /></Bare>
            <Bare aria-label="캡처"><Ico d={P.camera} s={15} /></Bare>
            <Bare aria-label="설정"><Gear s={13} /></Bare>
          </TitleIcons>
          <WindowButtons c="#444a52" />
        </TitleBar>
        <Presets>{presets.map(([t, w, latin]) => <Btn key={t} $w={w} $latin={latin}>{t}</Btn>)}</Presets>
        <Tools />

        <Work>
          <Side>
            <SideTabs>
              <SideTab>종목</SideTab>
              <SideTab $on>지표</SideTab>
              <SideTab>전략</SideTab>
            </SideTabs>
            <Find>
              <Field $w={122} placeholder="스마트 검색" aria-label="스마트 검색" />
              <Btn $w={20} aria-label="검색"><Ico d={P.search} s={14} /></Btn>
              <Btn $w={20} aria-label="펼치기"><Ico d="M5 4l3 3l3-3M5 8l3 3l3-3" s={14} /></Btn>
            </Find>
            <Group><Ico d="M2 2h5l1 2h6v10H2zM5 8v2h6V8z" s={13} f />유형</Group>
            <Tree>
              <legend><Ico d="M1.500 4v6h5" s={12} />차트유형</legend>
              {types.map((t, i) => (
                <Choice key={t}>
                  <input type="radio" name="chart-type" defaultChecked={i === 0} />
                  <span>{t}</span>
                </Choice>
              ))}
            </Tree>
            {groups.map((g) => <Group key={g}><Ico d={P.folder} s={13} />{g}</Group>)}
            <SideFoot>
              <span>관심지표</span>
              <Btn $w={38} $off>등록</Btn>
              <Btn $w={38} $off>삭제</Btn>
            </SideFoot>
          </Side>

          <Chart>
            <Quote>
              <Big $w={78}>5,481.62</Big>
              <Big $w={57}>▼3.15</Big>
              <Big $w={88}>-0.06%</Big>
              <Tag $w={69} $bg="none">0(주)</Tag>
              <Tag $w={22}>시</Tag>
              <Num $w={79} $c={UP}>5,489.73</Num>
              <Tag $w={22}>고</Tag>
              <Num $w={79} $c={UP}>5,498.47</Num>
              <Tag $w={22}>저</Tag>
              <Num $w={79} $c="#003cc8">5,455.86</Num>
              <Tag $w={72}>수신(현지)</Tag>
              <Tag $w={70} $bg="none">[10:59:59]</Tag>
              <Spacer />
              <Row $gap={2}>
                <Tag $w={24} $bg="none">[일]</Tag>
                <Btn $w={20} aria-label="차트 설정"><Gear s={12} /></Btn>
                <Btn $w={30} $off>매수</Btn>
                <Btn $w={30} $off>매도</Btn>
              </Row>
              <Stack>
                <Bare aria-label="최대화"><Ico d="M3 3h10v10H3z" s={7} /></Bare>
                <Bare aria-label="닫기"><Ico d="M3 3l10 10M13 3L3 13" s={7} /></Bare>
              </Stack>
            </Quote>
            <PricePane $grow={710}>
              <Plot>
                <PriceChart />
                <Legend>
                  <Key $c="#333"><b>S&P 500</b></Key>
                  <Key $c={GREEN}>가격이평&nbsp;&nbsp; 5</Key>
                  <Keys />
                </Legend>
                <Memo>트럼프대통령 당선</Memo>
              </Plot>
              <Axis>
                <AxisScale h={PRICE_H} first={37} step={10.034} marks={priceTicks.map((p) => [`${p.toLocaleString("en-US")}.00`, priceY(p)])} />
                <Corner><button>L</button><button>I</button><button>R</button></Corner>
                <Corner $right><button aria-label="최대화"><Ico d="M2 2h12v12H2z" s={6} /></button></Corner>
                <LastTag>5,481.62<br />(-0.06%)</LastTag>
              </Axis>
            </PricePane>
            <Pane $grow={353}>
              <Plot>
                <VolumeChart />
                <Legend>
                  <Key $c="#333">거래량</Key>
                  <Key $c={GREEN}>거래이평&nbsp;&nbsp; 5</Key>
                  <Keys />
                </Legend>
              </Plot>
              <Axis>
                <AxisScale h={VOL_H} first={21.5} step={5} marks={volTicks.map((v) => [v ? `${v},000K` : "0K", volY(v)])} />
                <Corner><button>L</button><button>I</button></Corner>
                <Corner $right><button aria-label="최대화"><Ico d="M2 2h12v12H2z" s={6} /></button><button>X</button></Corner>
              </Axis>
            </Pane>
            <Dates>
              <svg>
                <text x="2" y="13" fontWeight="bold">2024/09</text>
                {months.map(([m, x]) => (
                  <g key={m}>
                    <line x1={pct(x, PLOT_W)} x2={pct(x, PLOT_W)} y1="0" y2="6" stroke="#bbb" />
                    <text x={pct(x + 2, PLOT_W)} y="13" fontWeight={m.length > 2 ? "bold" : "normal"}>{m}</text>
                  </g>
                ))}
              </svg>
              <span>04/25</span>
            </Dates>
            <ScrollRow>
              <Mini $w={16}>세</Mini>
              <Mini $w={16}>순</Mini>
              <Mini $w={16}>황</Mini>
              <Mini $w={17} aria-label="왼쪽"><Ico d="M10 3v10L5 8z" s={9} f /></Mini>
              <Track><Thumb /></Track>
              <Mini $w={18} aria-label="오른쪽"><Ico d="M6 3v10l5-5z" s={9} f /></Mini>
              <Zoomer><input type="range" aria-label="확대 비율" /></Zoomer>
              <FootIcons>
                <Bare aria-label="축소"><Ico d={P.minus} s={14} /></Bare>
                <Bare aria-label="확대"><Ico d={P.plus} s={14} /></Bare>
                <Bare aria-label="자동"><Ico d="M3 14L8 2l5 12M5 10h6" s={14} /></Bare>
                <Bare aria-label="처음"><Ico d={P.prev} s={14} f /></Bare>
                <Bare aria-label="일시정지"><Ico d={P.pause} s={14} f /></Bare>
                <Bare aria-label="끝"><Ico d={P.next} s={14} f /></Bare>
                <Bare aria-label="엑셀"><Ico d={P.xl} s={14} /></Bare>
                <Bare aria-label="저장"><Ico d={P.save} s={14} /></Bare>
                <Bare aria-label="표"><Ico d={P.table} s={14} /></Bare>
                <Bare aria-label="분석"><Ico d="M1.500 1.500h13v13h-13zM1.500 10.500h13M3 8l3-3l2 2l5-5M5.500 10v4M10.500 10v4" s={14} /></Bare>
                <Bare aria-label="설정"><Gear s={13} /></Bare>
                <Bare aria-label="전체화면"><Ico d={P.full} s={14} /></Bare>
              </FootIcons>
            </ScrollRow>
          </Chart>

          <Strip>
            <Bare aria-label="새로고침"><Ico d={P.cycle} s={13} /></Bare>
            <Bare aria-label="설정"><Gear s={12} /></Bare>
            {stripIcons.map(([label, d]) => (
              <Bare key={label} aria-label={label}><StripGlyph d={d} /></Bare>
            ))}
          </Strip>
        </Work>
      </Window>

      <Bottom>
        <NewsTab>
          <AccountTab>미래에셋증권<span>×</span></AccountTab>
          <Spacer />
          <Row $gap={8}>
            <Bare aria-label="문서"><Ico d={P.doc} /></Bare>
            <Bare aria-label="고정"><Ico d={P.pin} /></Bare>
            <Bare aria-label="닫기"><Ico d={P.xbox} s={14} /></Bare>
          </Row>
        </NewsTab>
        <Feeds>
          <Feed>
            <Breadth n="거래소" v={["↑ 3", "▲ 647", "49", "▼ 239", "↓ 0"]} />
            <Breadth n="코스닥" v={["↑ 7", "1,020", "111", "▼ 573", "↓ 0"]} />
          </Feed>
          <Feed>
            <IndexRow n="거래소" v={["2,546.30", "▲ 23.97", "+0.95%", "403,528"]} />
            <IndexRow n="코스닥" v={["729.69", "▲ 3.61", "+0.50%", "1,010,313"]} />
          </Feed>
          <Feed>
            <Row><Name /><Headline href="#news" aria-label="뉴스" /><Caret>▼</Caret></Row>
            <Row><Name>한경</Name><Headline $on href="#news">'K반도체 저승사자' 모건스탠리…SK하이닉스에 또 경고 [종목+]</Headline><Caret>▼</Caret></Row>
          </Feed>
          <Investors>
            {investors.map(([n, v]) => (
              <Row key={n}>
                <Name>{n}</Name>
                {v.map((t, k) => <Val key={k} $w={46} $c={t[0] === "+" || t === "0" ? "#f01428" : "#3c6ef0"}>{t}</Val>)}
              </Row>
            ))}
          </Investors>
        </Feeds>
        <Clock>
          <time><small>PM</small>03:42:19</time>
          <time>Today | 2025.04.27[일]</time>
        </Clock>
      </Bottom>
    </Page>
  );
}
